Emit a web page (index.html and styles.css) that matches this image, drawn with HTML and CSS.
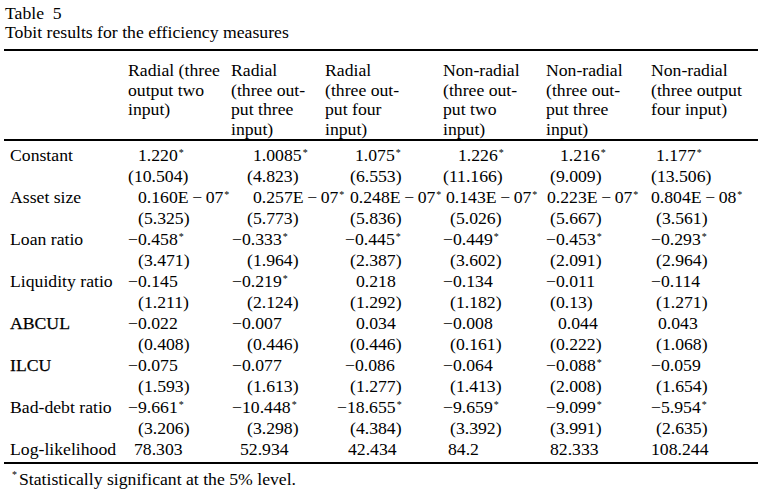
FILE: index.html
```html
<!DOCTYPE html>
<html>
<head>
<meta charset="utf-8">
<link rel="stylesheet" href="styles.css">
</head>
<body>
<div class="page">
  <div class="title">Table&nbsp; 5</div>
  <div class="title">Tobit results for the efficiency measures</div>
  <table class="tbl">
    <colgroup>
      <col class="c0"><col class="c1"><col class="c2"><col class="c3"><col class="c4"><col class="c5"><col class="c6">
    </colgroup>
    <thead>
      <tr>
        <th></th>
        <th>Radial (three<br>output two<br>input)</th>
        <th>Radial<br>(three out-<br>put three<br>input)</th>
        <th>Radial<br>(three out-<br>put four<br>input)</th>
        <th>Non-radial<br>(three out-<br>put two<br>input)</th>
        <th>Non-radial<br>(three out-<br>put three<br>input)</th>
        <th>Non-radial<br>(three output<br>four input)</th>
      </tr>
    </thead>
    <tbody>
      <tr class="first">
        <td class="lab">Constant</td>
        <td class="o10">1.220<sup class="st">*</sup></td>
        <td class="o22">1.0085<sup class="st">*</sup></td>
        <td class="o30">1.075<sup class="st">*</sup></td>
        <td class="o15">1.226<sup class="st">*</sup></td>
        <td class="o14">1.216<sup class="st">*</sup></td>
        <td class="o5">1.177<sup class="st">*</sup></td>
      </tr>
      <tr>
        <td class="lab"></td>
        <td class="o0">(10.504)</td>
        <td class="o16">(4.823)</td>
        <td class="o25">(6.553)</td>
        <td class="o0">(11.166)</td>
        <td class="o4">(9.009)</td>
        <td class="o0">(13.506)</td>
      </tr>
      <tr>
        <td class="lab">Asset size</td>
        <td class="o10">0.160E&#8201;−&#8201;07<sup class="st">*</sup></td>
        <td class="o22">0.257E&#8201;−&#8201;07<sup class="st">*</sup></td>
        <td class="o25">0.248E&#8201;−&#8201;07<sup class="st">*</sup></td>
        <td class="o3">0.143E&#8201;−&#8201;07<sup class="st">*</sup></td>
        <td class="o1">0.223E&#8201;−&#8201;07<sup class="st">*</sup></td>
        <td class="o0">0.804E&#8201;−&#8201;08<sup class="st">*</sup></td>
      </tr>
      <tr>
        <td class="lab"></td>
        <td class="o10">(5.325)</td>
        <td class="o16">(5.773)</td>
        <td class="o25">(5.836)</td>
        <td class="o7">(5.026)</td>
        <td class="o4">(5.667)</td>
        <td class="o5">(3.561)</td>
      </tr>
      <tr>
        <td class="lab">Loan ratio</td>
        <td class="o0">−0.458<sup class="st">*</sup></td>
        <td class="o1">−0.333<sup class="st">*</sup></td>
        <td class="o20">−0.445<sup class="st">*</sup></td>
        <td class="o0">−0.449<sup class="st">*</sup></td>
        <td class="o0">−0.453<sup class="st">*</sup></td>
        <td class="o0">−0.293<sup class="st">*</sup></td>
      </tr>
      <tr>
        <td class="lab"></td>
        <td class="o10">(3.471)</td>
        <td class="o16">(1.964)</td>
        <td class="o25">(2.387)</td>
        <td class="o7">(3.602)</td>
        <td class="o4">(2.091)</td>
        <td class="o5">(2.964)</td>
      </tr>
      <tr>
        <td class="lab">Liquidity ratio</td>
        <td class="o0">−0.145</td>
        <td class="o1">−0.219<sup class="st">*</sup></td>
        <td class="o31">0.218</td>
        <td class="o0">−0.134</td>
        <td class="o0">−0.011</td>
        <td class="o0">−0.114</td>
      </tr>
      <tr>
        <td class="lab"></td>
        <td class="o10">(1.211)</td>
        <td class="o16">(2.124)</td>
        <td class="o25">(1.292)</td>
        <td class="o7">(1.182)</td>
        <td class="o4">(0.13)</td>
        <td class="o5">(1.271)</td>
      </tr>
      <tr>
        <td class="lab caps">ABCUL</td>
        <td class="o0">−0.022</td>
        <td class="o1">−0.007</td>
        <td class="o31">0.034</td>
        <td class="o0">−0.008</td>
        <td class="o12">0.044</td>
        <td class="o7">0.043</td>
      </tr>
      <tr>
        <td class="lab"></td>
        <td class="o10">(0.408)</td>
        <td class="o16">(0.446)</td>
        <td class="o25">(0.446)</td>
        <td class="o7">(0.161)</td>
        <td class="o4">(0.222)</td>
        <td class="o5">(1.068)</td>
      </tr>
      <tr>
        <td class="lab caps">ILCU</td>
        <td class="o0">−0.075</td>
        <td class="o1">−0.077</td>
        <td class="o20">−0.086</td>
        <td class="o0">−0.064</td>
        <td class="o0">−0.088<sup class="st">*</sup></td>
        <td class="o0">−0.059</td>
      </tr>
      <tr>
        <td class="lab"></td>
        <td class="o10">(1.593)</td>
        <td class="o16">(1.613)</td>
        <td class="o25">(1.277)</td>
        <td class="o7">(1.413)</td>
        <td class="o4">(2.008)</td>
        <td class="o5">(1.654)</td>
      </tr>
      <tr>
        <td class="lab">Bad-debt ratio</td>
        <td class="o0">−9.661<sup class="st">*</sup></td>
        <td class="o1">−10.448<sup class="st">*</sup></td>
        <td class="o12">−18.655<sup class="st">*</sup></td>
        <td class="o0">−9.659<sup class="st">*</sup></td>
        <td class="o0">−9.099<sup class="st">*</sup></td>
        <td class="o0">−5.954<sup class="st">*</sup></td>
      </tr>
      <tr>
        <td class="lab"></td>
        <td class="o10">(3.206)</td>
        <td class="o16">(3.298)</td>
        <td class="o25">(4.384)</td>
        <td class="o7">(3.392)</td>
        <td class="o4">(3.991)</td>
        <td class="o5">(2.635)</td>
      </tr>
      <tr class="last">
        <td class="lab">Log-likelihood</td>
        <td class="o6">78.303</td>
        <td class="o9">52.934</td>
        <td class="o23">42.434</td>
        <td class="o5">84.2</td>
        <td class="o4">82.333</td>
        <td class="o0">108.244</td>
      </tr>
    </tbody>
  </table>
  <p class="note"><sup class="nst">*</sup>Statistically significant at the 5% level.</p>
</div>
</body>
</html>
```
FILE: styles.css
```css
html, body {
  margin: 0;
  padding: 0;
  background: #fff;
}

body {
  font-family: "Liberation Serif", "Times New Roman", serif;
  font-size: 17.7px;
  color: #000;
}

.page {
  padding: 4px 8px 0 4px;
}

.title {
  line-height: 19px;
  padding-left: 1px;
  white-space: nowrap;
}

.tbl {
  border-collapse: collapse;
  table-layout: fixed;
  width: 754px;
  margin-top: 7px;
}

.c0 { width: 124px; }
.c1 { width: 103px; }
.c2 { width: 94px; }
.c3 { width: 118px; }
.c4 { width: 103px; }
.c5 { width: 105px; }
.c6 { width: 107px; }

.tbl th {
  font-weight: normal;
  text-align: left;
  vertical-align: top;
  line-height: 19.5px;
  padding: 10px 0 0 0;
  border-top: 2px solid #000;
  border-bottom: 2px solid #000;
  white-space: nowrap;
}

.tbl td {
  padding: 0;
  line-height: 21px;
  white-space: nowrap;
  vertical-align: top;
  overflow: visible;
}

.tbl tr.first td { padding-top: 4px; }
.tbl tr.last td {
  padding-bottom: 2px;
  border-bottom: 2px solid #000;
}

.tbl td.lab { padding-left: 6px; }
.tbl td.caps { -webkit-text-stroke: 0.25px #000; }

.st {
  font-size: 10px;
  line-height: 0;
  vertical-align: 5px;
  margin-left: 1px;
}

.tbl td.o0 { padding-left: 0; }
.tbl td.o1 { padding-left: 1px; }
.tbl td.o3 { padding-left: 3px; }
.tbl td.o4 { padding-left: 4px; }
.tbl td.o5 { padding-left: 5px; }
.tbl td.o6 { padding-left: 6px; }
.tbl td.o7 { padding-left: 7px; }
.tbl td.o9 { padding-left: 9px; }
.tbl td.o10 { padding-left: 10px; }
.tbl td.o12 { padding-left: 12px; }
.tbl td.o14 { padding-left: 14px; }
.tbl td.o15 { padding-left: 15px; }
.tbl td.o16 { padding-left: 16px; }
.tbl td.o20 { padding-left: 20px; }
.tbl td.o22 { padding-left: 22px; }
.tbl td.o23 { padding-left: 23px; }
.tbl td.o25 { padding-left: 25px; }
.tbl td.o30 { padding-left: 30px; }
.tbl td.o31 { padding-left: 31px; }

.note {
  margin: 5px 0 0 0;
  padding-left: 8px;
  line-height: 20px;
  white-space: nowrap;
}

.nst {
  font-size: 10px;
  line-height: 0;
  vertical-align: 7px;
  margin-right: 2px;
}
```
